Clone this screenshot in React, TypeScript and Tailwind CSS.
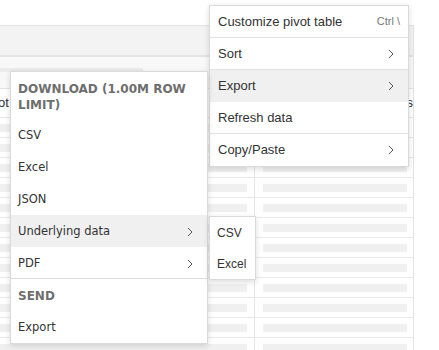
const rows = Array.from({ length: 12 }, (_, i) => i);

function Chevron() {
  return (
    <svg width="6" height="10" viewBox="0 0 6 10" fill="none">
      <path d="M1 1l4 4-4 4" stroke="#555" strokeWidth="1" />
    </svg>
  );
}

export default function App() {
  return (
    <div className="relative h-[350px] w-[439px] overflow-hidden bg-white font-['Liberation_Sans',Arial,sans-serif] text-[#333]">
      {/* table behind the menus */}
      <div className="h-[25px]" />
      <div className="w-[414px] border-r border-[#e3e3e3]">
        <div className="h-[32px] border-t border-b-2 border-[#e3e3e3] bg-[#f3f3f3]" />
        <div className="h-[32px] border-b border-[#e3e3e3] bg-[#f8f8f8] pt-[11px]">
          <div className="h-[4px] w-[143px] bg-[#ebebeb]" />
        </div>
        <div className="flex h-[29px] items-center border-b border-[#e6e6e6] text-[13px]">
          <div className="w-[255px] overflow-hidden">
            <span className="-ml-[20px] block">Pivot</span>
          </div>
          <div className="flex-1 overflow-hidden text-right">Rows</div>
        </div>
        {rows.map((r) => (
          <div key={r} className="flex h-[20px] border-b border-[#e9e9e9]">
            <div className="w-[255px] border-r border-[#e6e6e6] pt-[6px]">
              <div className="h-[8px] w-[247px] bg-[#f0f0f0]" />
            </div>
            <div className="flex-1 pt-[6px] pl-[8px]">
              <div className="h-[8px] w-[144px] bg-[#f0f0f0]" />
            </div>
          </div>
        ))}
      </div>

      {/* main context menu */}
      <div className="absolute left-[209px] top-[5px] w-[200px] border border-[#dadada] bg-white text-[13px] shadow-[0_2px_6px_rgba(0,0,0,0.14)]">
        <div className="flex h-8 items-center justify-between border-b border-[#e2e2e2] pl-2 pr-2">
          <span>Customize pivot table</span>
          <span className="text-[11px] text-[#777]">Ctrl \</span>
        </div>
        <div className="flex h-8 items-center justify-between border-b border-[#e2e2e2] pl-2 pr-[14px]">
          <span>Sort</span>
          <Chevron />
        </div>
        <div className="flex h-8 items-center justify-between bg-[#f0f0f0] pl-2 pr-[14px]">
          <span>Export</span>
          <Chevron />
        </div>
        <div className="flex h-8 items-center border-b border-[#e2e2e2] pl-2">
          <span>Refresh data</span>
        </div>
        <div className="flex h-8 items-center justify-between pl-2 pr-[14px]">
          <span>Copy/Paste</span>
          <Chevron />
        </div>
      </div>

      {/* export submenu */}
      <div className="absolute left-[10px] top-[71px] w-[198px] border border-[#dadada] bg-white font-['DejaVu_Sans',Verdana,sans-serif] text-[11.5px] text-[#333] shadow-[0_2px_6px_rgba(0,0,0,0.14)]">
        <div className="px-[7px] pt-[9px] pb-[6px] text-[12px] leading-[16px] font-bold text-[#6e6e6e]">
          DOWNLOAD (1.00M ROW LIMIT)
        </div>
        <div className="flex h-8 items-center pl-[7px] pt-[2px]">CSV</div>
        <div className="flex h-8 items-center pl-[7px] pt-[2px]">Excel</div>
        <div className="flex h-8 items-center pl-[7px] pt-[2px]">JSON</div>
        <div className="flex h-8 items-center justify-between bg-[#f0f0f0] pl-[7px] pr-[14px] pt-[2px]">
          <span>Underlying data</span>
          <Chevron />
        </div>
        <div className="flex h-8 items-center justify-between border-b border-[#dedede] pl-[7px] pr-[14px] pt-[2px]">
          <span>PDF</span>
          <Chevron />
        </div>
        <div className="flex h-8 items-center pl-[7px] pt-[2px] text-[12px] font-bold text-[#6e6e6e]">SEND</div>
        <div className="flex h-8 items-center pl-[7px] pt-[2px]">Export</div>
      </div>

      {/* underlying data submenu */}
      <div className="absolute left-[209px] top-[216px] w-[47px] border border-[#dadada] bg-white text-[12px] shadow-[0_2px_6px_rgba(0,0,0,0.14)]">
        <div className="flex h-[31px] items-center pl-[7px]">CSV</div>
        <div className="flex h-[31px] items-center pl-[7px]">Excel</div>
      </div>
    </div>
  );
}
